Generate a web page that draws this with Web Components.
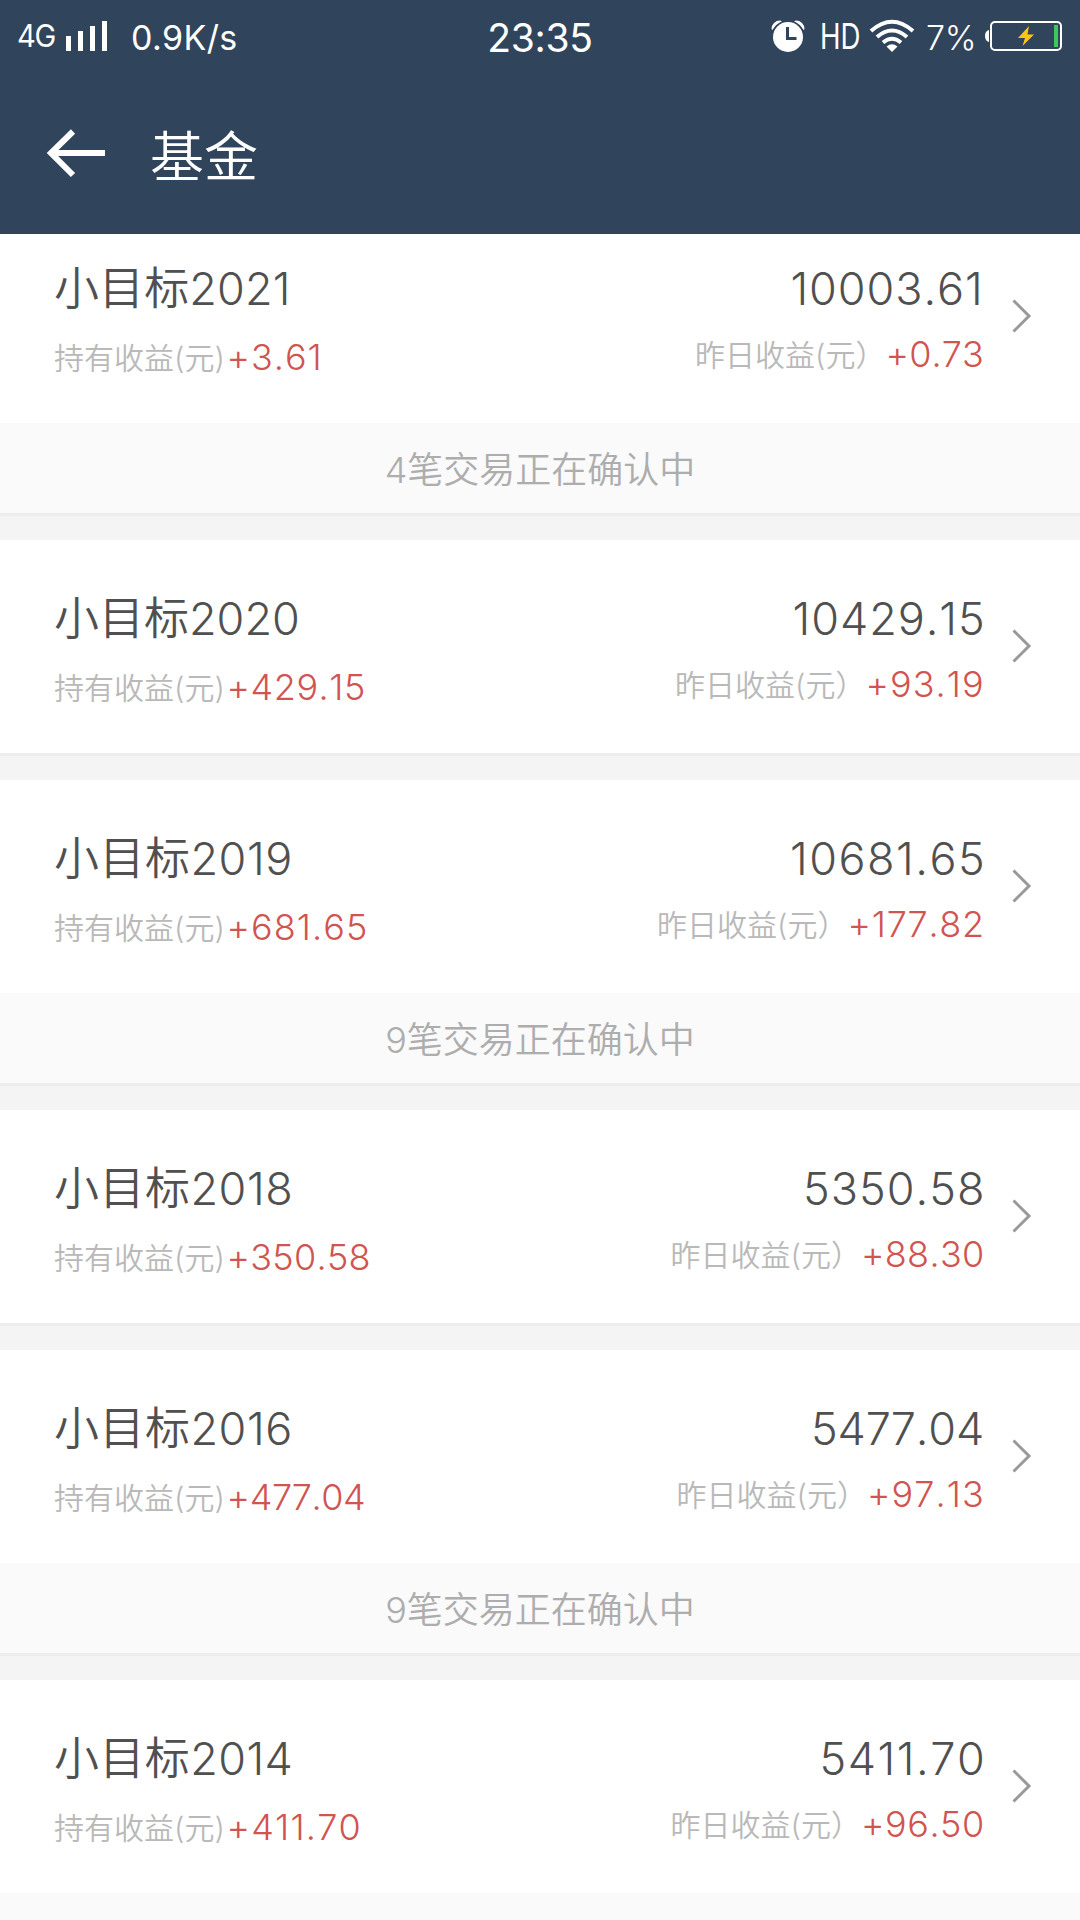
<!DOCTYPE html>
<html lang="zh-CN">
<head>
<meta charset="utf-8">
<title>基金</title>
<style>
html,body{margin:0;padding:0}
body{width:1080px;height:1920px;overflow:hidden;background:#f4f4f4;font-family:Inter,"Noto Sans CJK SC",sans-serif;font-weight:350}
</style>
</head>
<body>
<fund-app></fund-app>
<script>
class StatusBar extends HTMLElement{
  constructor(){
    super();
    this.attachShadow({mode:'open'}).innerHTML=`
<style>
:host{display:grid;grid-template-columns:1fr auto 1fr;align-items:start;height:72px;color:#fff;font-weight:400}
.side{display:flex;align-items:flex-start;white-space:nowrap}
.left{padding-left:16.500px}
.right{justify-content:flex-end;padding-right:18px}
svg{display:block;flex:none}
.net{font-size:31px;line-height:48px;width:49.500px;letter-spacing:-1.5px;padding-top:12px;box-sizing:border-box}
.net span,.hd span{display:inline-block;transform-origin:0 50%}
.net span{transform:scaleX(.94)}
.speed{font-size:34px;line-height:48px;padding-top:14px;margin-left:23px;letter-spacing:.4px}
.time{font-size:39px;line-height:48px;padding-top:14px;letter-spacing:-.3px}
.hd{font-size:35px;line-height:48px;padding-top:12px;font-weight:400;width:43px;margin:0 6px 0 15px}
.hd span{transform:scaleX(.79)}
.pct{font-size:34px;line-height:48px;padding-top:14px;width:48px;margin:0 10px 0 11px;font-weight:350;letter-spacing:-.4px}
</style>
<div class="side left"><div class="net"><span>4G</span></div>
<svg width="42" height="60" fill="#fff"><path d="M0 36h5v15H0zM12 31h5v20h-5zM24 26h5v25h-5zM36 21h5v30h-5z"/></svg>
<div class="speed">0.9K/s</div></div>
<div class="time">23:35</div>
<div class="side right">
<svg width="34" height="60" viewBox="771 0 34 60"><circle cx="788" cy="37" r="15" fill="#fff"/><path d="M771.500 29a8.500 8.500 0 0 1 8.500-8.500l2 .8q-6.500 3-9.500 8.700zM804.500 29a8.500 8.500 0 0 0-8.500-8.500l-2 .8q6.500 3 9.500 8.700z" fill="#fff"/><path d="M787.500 27v11.500h9" fill="none" stroke="#30445c" stroke-width="3"/></svg>
<div class="hd"><span>HD</span></div>
<svg width="46" height="60" viewBox="869 0 46 60" fill="none" stroke="#fff" stroke-width="4"><path d="M871 31Q892 12.500 913 31M877 37Q892 24 907 37M883 42.500Q892 35 901 42.500"/><path d="M886.500 46.500Q892 42 897.500 46.500L892 52z" fill="#fff" stroke="none"/></svg>
<div class="pct">7%</div>
<svg width="78" height="60" viewBox="984 0 78 60"><path d="M989 30v12q-4-1-4-6t4-6z" fill="#fff"/><rect x="991" y="22" width="70" height="28" rx="4" fill="none" stroke="#fff" stroke-width="2"/><path d="M1029 26l-11 12h7l-2.500 8L1034 34.500h-6.500z" fill="#fdc80a"/><path d="M1054 25h4v22h-4z" fill="#3cc85c"/></svg>
</div>`;
  }
}
class TitleBar extends HTMLElement{
  constructor(){
    super();
    this.attachShadow({mode:'open'}).innerHTML=`
<style>
:host{display:flex;align-items:center;height:162px;color:#fff}
svg{margin:0 45px 0 45px;flex:none}
h1{margin:10px 0 0;font-size:54px;font-weight:350;line-height:80px}
</style>
<svg width="60" height="60" viewBox="45 123 60 60" fill="none" stroke="#fff" stroke-width="6"><path d="M105 153H51M73 131.500L51 153l22 22"/></svg>
<h1><slot></slot></h1>`;
  }
}
const pen=document.createElement('canvas').getContext('2d');
/* Number whose visible glyphs span exactly the "span" attribute, tracked evenly. */
class TrackedNumber extends HTMLElement{
  constructor(){
    super();
    this.attachShadow({mode:'open'}).innerHTML=`
<style>
:host{display:block;white-space:nowrap;font-kerning:none}
span{display:block}
</style><span></span>`;
  }
  connectedCallback(){
    const text=this.getAttribute('value'),span=+this.getAttribute('span'),el=this.shadowRoot.querySelector('span');
    el.textContent=text;
    pen.font=`350 ${this.getAttribute('size')}px Inter`;
    pen.fontKerning='none';
    const m=pen.measureText(text),ink=m.actualBoundingBoxRight+m.actualBoundingBoxLeft;
    el.style.letterSpacing=((span-ink)/(text.length-1)).toFixed(3)+'px';
    el.style.marginLeft=m.actualBoundingBoxLeft.toFixed(2)+'px';
    this.style.width=span+'px';
  }
}
class FundCard extends HTMLElement{
  connectedCallback(){
    if(this.shadowRoot)return;
    const number=(key,size,cls)=>{
      const [value,span]=this.getAttribute(key).split(' ');
      return `<tracked-number class="${cls}" size="${size}" value="${value}" span="${span}"></tracked-number>`;
    };
    this.attachShadow({mode:'open'}).innerHTML=`
<style>
:host{display:block;flex:none;border-bottom:3px solid #ededed;background:#fff}
.row{display:flex;height:213px;box-sizing:border-box;padding:52px 48px 0 54px;white-space:nowrap}
.col{display:flex;flex-direction:column;gap:14px;flex:1}
.col.r{align-items:flex-end;gap:11px;padding-right:2px}
.big{font-size:45px;line-height:54px;color:#505050}
.name{font-kerning:none;letter-spacing:var(--track,.5px)}
.short{margin-right:3px}
.line{display:flex;font-size:30px;line-height:54px;color:#b9b9b9}
.line>span{margin-top:1px}
.l .line>span{width:175.500px}
.r .line>span{width:193.500px}
.gain{font-size:36px;color:#d05450}
svg{margin:37px 0 0 27px;flex:none}
::slotted([slot=notice]){display:block;height:90px;box-sizing:border-box;padding-top:20px;background:#fafafa;color:#adadad;font-size:36px;line-height:54px;text-align:center}
</style>
<div class="row">
<div class="col l"><div class="big name"><slot></slot></div><div class="line"><span>持有收益(元)</span>${number('hold',36,'gain')}</div></div>
<div class="col r">${number('amount',45,this.getAttribute('amount').split(' ')[0].endsWith('1')?'big short':'big')}<div class="line"><span>昨日收益(元）</span>${number('day',36,'gain')}</div></div>
<svg width="21" height="34" fill="none" stroke="#999" stroke-width="3"><path d="M2.500 1.500L18 17 2.500 32.500"/></svg>
</div>
<slot name="notice"></slot>`;
  }
}
class FundApp extends HTMLElement{
  constructor(){
    super();
    this.attachShadow({mode:'open'}).innerHTML=`
<style>
:host{display:flex;flex-direction:column;width:1080px;height:1920px;overflow:hidden}
header{flex:none;height:234px;background:#30445c}
main{flex:1;min-height:0;overflow:hidden;display:flex;flex-direction:column}
.list{display:flex;flex-direction:column;gap:24px;margin-top:-24px}
</style>
<header><status-bar></status-bar><title-bar>基金</title-bar></header>
<main><div class="list">
<fund-card style="--track:.1px" amount="10003.61 186.5" hold="+3.61 89" day="+0.73 93.5">小目标2021<div slot="notice">4笔交易正在确认中</div></fund-card>
<fund-card style="--track:0px" amount="10429.15 187.5" hold="+429.15 134.5" day="+93.19 113.5">小目标2020</fund-card>
<fund-card amount="10681.65 190" hold="+681.65 136.5" day="+177.82 131.5">小目标2019<div slot="notice">9笔交易正在确认中</div></fund-card>
<fund-card amount="5350.58 176" hold="+350.58 139" day="+88.30 118">小目标2018</fund-card>
<fund-card amount="5477.04 168" hold="+477.04 134.5" day="+97.13 112">小目标2016<div slot="notice">9笔交易正在确认中</div></fund-card>
<fund-card style="--track:.4px" amount="5411.70 159.5" hold="+411.70 129" day="+96.50 118">小目标2014<div slot="notice"></div></fund-card>
</div></main>`;
  }
}
customElements.define('status-bar',StatusBar);
customElements.define('title-bar',TitleBar);
customElements.define('tracked-number',TrackedNumber);
customElements.define('fund-card',FundCard);
customElements.define('fund-app',FundApp);
</script>
</body>
</html>
